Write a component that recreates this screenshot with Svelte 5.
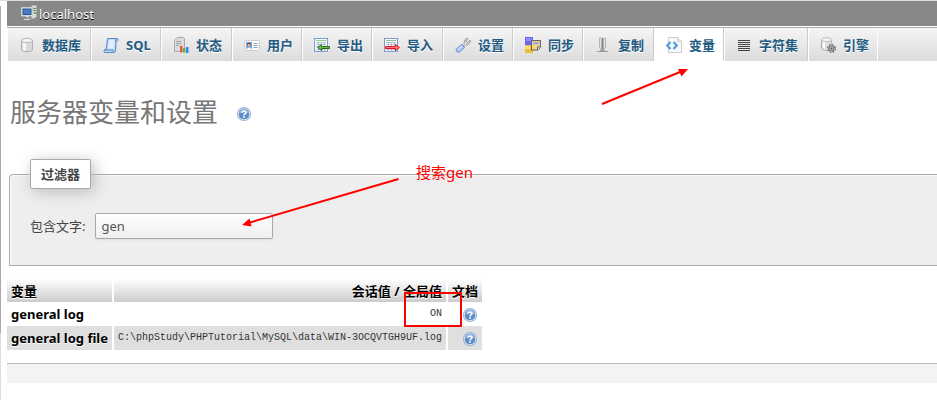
<script>
  const tabs = [
    { id: 'db', label: '数据库', wide: true },
    { id: 'sql', label: 'SQL' },
    { id: 'status', label: '状态' },
    { id: 'users', label: '用户' },
    { id: 'export', label: '导出' },
    { id: 'import', label: '导入' },
    { id: 'settings', label: '设置' },
    { id: 'sync', label: '同步' },
    { id: 'replication', label: '复制' },
    { id: 'vars', label: '变量', active: true },
    { id: 'charsets', label: '字符集', wide: true },
    { id: 'engines', label: '引擎' }
  ];
  const rows = [
    { name: 'general log', value: 'ON' },
    { name: 'general log file', value: 'C:\\phpStudy\\PHPTutorial\\MySQL\\data\\WIN-3OCQVTGH9UF.log' }
  ];
  let filter = $state('gen');
  const shown = $derived(rows.filter((r) => r.name.includes(filter)));
</script>

{#snippet help()}
  <a class="help" href="#doc" aria-label="文档">
    <svg width="16" height="16" viewBox="0 0 16 16">
      <circle cx="8" cy="8" r="7" fill="#8caad2" />
      <circle cx="8" cy="8" r="5.800" fill="#5f8cc6" stroke="#e3ebf6" stroke-width=".9" />
      <path d="M3 7.500a5 5 0 0 1 10 0q-5-1.500-10 0z" fill="#8fb0dc" />
      <path d="M6 6.700C6.100 4.500 10 4.500 10 6.600 10 8 8 7.900 8 9.400" fill="none" stroke="#fff" stroke-width="1.500" />
      <rect x="7.200" y="10.300" width="1.600" height="1.600" fill="#fff" />
    </svg>
  </a>
{/snippet}

{#snippet icon(id)}
  <svg class="icon" width="16" height="16" viewBox="0 0 16 16" aria-hidden="true">
    {#if id === 'db'}
      <path d="M2.500 3.500v9c0 3 11 3 11 0v-9z" fill="#d9d9d9" stroke="#b0b0b0" />
      <path d="M4 5v8l3 1V6z" fill="#f7f7f7" />
      <ellipse cx="8" cy="3.500" rx="5.500" ry="2.200" fill="#f2f2f2" stroke="#b8b8b8" />
    {:else if id === 'sql'}
      <path d="M4.500 1.500h10q1.500 2-.5 3l-1 0-.5 9.500q-.5 1.500-2 1.500h-9q-1.200-1.500.2-3h1.500z" fill="#bcd8f6" stroke="#5b8bc5" />
      <path d="M6 3h5.500l-.5 8.500H5z" fill="#e2effd" />
      <path d="M1.500 13h8.500q0 2 1.500 2M12.500 4.500q-.5-2 1-3" fill="none" stroke="#5b8bc5" />
    {:else if id === 'status'}
      <path d="M1.500 3l3-2.500h6l1 1V12l-2.500 2.500h-7.500z" fill="#dcdcdc" stroke="#aaa" />
      <path d="M3 4.500h5M3 6.500h5M3 8.500h3" stroke="#a0a0a0" />
      <rect x="7" y="9" width="2.500" height="6.500" fill="#f5533c" />
      <rect x="10" y="11" width="2.500" height="4.500" fill="#4cc24b" />
      <rect x="13" y="10" width="2.500" height="6" fill="#3f83f0" />
    {:else if id === 'users'}
      <rect x=".5" y="3.500" width="15" height="10" rx="1" fill="#fafafa" stroke="#cdcdcd" />
      <rect x="2" y="5" width="6" height="7" fill="#74a9e8" />
      <circle cx="5" cy="7.500" r="1.900" fill="#8b5332" />
      <circle cx="5" cy="8.200" r="1.200" fill="#f1b88c" />
      <path d="M2.500 12q2.500-3 5 0z" fill="#fff" />
      <path d="M9.500 6.500h4M9.500 8.500h4M9.500 10.500h4" stroke="#8baacb" />
    {:else if id === 'export' || id === 'import'}
      <rect x=".5" y="1.500" width="13" height="13" fill="#f8faff" stroke="#7d9cd0" />
      <path d="M2 3.500h10" stroke="#9ac48b" />
      <path d="M2 5.500h10M2 7.500h10M2 9.500h10M2 12.500h10M4.500 5v9M7.500 5v9M10.500 5v9" stroke="#a8b6cd" stroke-width=".8" />
      {#if id === 'export'}
        <path d="M3.500 10.500l4-3v2H15.500v2H7.500v2z" fill="#6bbd52" stroke="#276e20" />
      {:else}
        <path d="M1.500 9.500h10v-2l4 3-4 3v-2h-10z" fill="#ff7b7b" stroke="#e81818" />
      {/if}
    {:else if id === 'settings'}
      <path d="M7 8.500l2-2Q8.500 2.500 12 1l1 .5-2 2.500 1.500 1.500L15 3l.5 1q-1 4-4.500 4L9.500 9.500z" fill="#d5d5d5" stroke="#9a9a9a" stroke-width=".9" />
      <path d="M6.500 7.500l3 3-5 4.500q-3 1-3.500-2 0-1 1-1.500z" fill="#a9c8f4" stroke="#6d93d0" />
      <path d="M3 12.500l4-3.500" stroke="#e5f0ff" />
    {:else if id === 'sync'}
      <rect x="0" y="0" width="8" height="8" fill="#6a66ef" />
      <rect x="1" y="1" width="6" height="3" fill="#8d8aff" />
      <path d="M0 8h8v8H0z" fill="#edbc3f" />
      <path d="M0 9h5v3H0z" fill="#ffdf72" />
      <path d="M6.500 3.500h9v7l-2.500 2.500h-6.500z" fill="#f2d678" stroke="#655f68" />
      <rect x="8" y="5" width="6" height="2.500" fill="#aaa7ef" />
      <path d="M12.500 13v-3h3" fill="#fff" stroke="#655f68" />
    {:else if id === 'replication'}
      <path d="M4.500 1v9l2 3V1zM8.500 1v12l2-3V1z" fill="#e2e2e2" stroke="#b5b5b5" />
      <path d="M7.500 1v13" stroke="#858585" />
      <path d="M2 14.500h11M5 13.500h5" stroke="#9c9c9c" />
    {:else if id === 'vars'}
      <path d="M2.500.5h9l4 4v11h-13z" fill="#fafafa" stroke="#cbcbcb" />
      <path d="M11.500.5v4h4" fill="#eee" stroke="#cbcbcb" />
      <path d="M4.500 5L1.200 8.500l3.300 3.500M7.500 5l3.300 3.500L7.500 12" fill="none" stroke="#4f9ae8" stroke-width="2.200" />
    {:else if id === 'charsets'}
      <path d="M2 3.500h12M2 5.500h12M2 7.500h12M2 9.500h12M2 11.500h12M2 13.500h12" stroke="#444" />
    {:else if id === 'engines'}
      <path d="M1.500 2.500v9c0 2.500 10 2.500 10 0v-9z" fill="#dedede" stroke="#b5b5b5" />
      <path d="M3 4v7l2 1V5z" fill="#fff" />
      <ellipse cx="6.500" cy="2.700" rx="5" ry="2" fill="#f5f5f5" stroke="#bdbdbd" />
      <circle cx="11.500" cy="11.500" r="3.800" fill="none" stroke="#777" stroke-width="1.600" stroke-dasharray="1.700 1.280" />
      <circle cx="11.500" cy="11.500" r="2.500" fill="#c5c5c5" stroke="#777" stroke-width="1.200" />
      <circle cx="11.500" cy="11.500" r="1" fill="#555" />
    {/if}
  </svg>
{/snippet}

<div class="page">
  <header>
    <svg width="16" height="16" viewBox="0 0 16 16" aria-hidden="true">
      <path d="M10.500 1.500l1-1h4v11l-2 2h-3z" fill="#d8dcd8" stroke="#aab0aa" />
      <path d="M12 3.500h3M12 5.500h3" stroke="#7b867b" />
      <rect x="13" y="7" width="2" height="2" fill="#54b948" />
      <rect x=".5" y="2.500" width="11" height="8.500" fill="#dce7f5" stroke="#c6ced8" />
      <rect x="2" y="4" width="8" height="5.500" fill="#4a7dc0" stroke="#25528e" />
      <path d="M5 11.500h2v2M3 14.500h6" stroke="#dedede" fill="none" />
    </svg>
    <a href="#server">localhost</a>
  </header>

  <nav>
    <ul>
      {#each tabs as tab}
        <li class:wide={tab.wide} class:active={tab.active}>
          <a href={'#' + tab.id}>{@render icon(tab.id)}{tab.label}</a>
        </li>
      {/each}
    </ul>
  </nav>

  <main>
    <h2>服务器变量和设置 {@render help()}</h2>

    <fieldset>
      <legend>过滤器</legend>
      <label for="filter">包含文字:</label>
      <input id="filter" type="text" bind:value={filter} />
    </fieldset>

    <table>
      <thead>
        <tr><th>变量</th><th class="value">会话值 / 全局值</th><th>文档</th></tr>
      </thead>
      <tbody>
        {#each shown as row}
          <tr>
            <th scope="row">{row.name}</th>
            <td class="value">{row.value}</td>
            <td class="doc">{@render help()}</td>
          </tr>
        {/each}
      </tbody>
    </table>
  </main>
  <footer></footer>

  <div class="notes">
    <svg width="937" height="400" viewBox="0 0 937 400" aria-hidden="true">
      <g stroke="#f00" stroke-width="2" fill="none">
        <path d="M602 104L680 72M398.500 179L250 222.500" />
        <rect x="405" y="293" width="56" height="33" />
      </g>
      <path d="M688 69l-6.500 7.500-3.500-7.500zM242 225l7.500-6.500 2 8z" fill="#f00" />
    </svg>
    <span>搜索gen</span>
  </div>
</div>

<style>
  :global(body) {
    margin: 0;
    background: #fff;
  }
  .page {
    position: relative;
    min-height: 400px;
    box-sizing: border-box;
    overflow: hidden;
    padding-left: 7px;
    border-top: 1px solid #dcdde0;
    background: linear-gradient(#fff 5px, #aaa 5px 332px, #ddd 332px) left / 1px 100% no-repeat;
    font: 13px/18px "Noto Sans", "Noto Sans CJK SC", sans-serif;
    color: #444;
  }
  a {
    color: inherit;
    text-decoration: none;
  }
  header {
    display: flex;
    align-items: center;
    gap: 2px;
    height: 25px;
    padding-left: 14px;
    background: #888;
    color: #fff;
    text-shadow: 0 1px 0 #000;
  }
  header svg {
    margin-bottom: 2px;
  }
  nav {
    margin-top: 1px;
    border-top: 1px solid #aaa;
    background: linear-gradient(#f5f5f5, #dcdcdc);
  }
  ul {
    display: flex;
    margin: 0;
    padding: 0;
    list-style: none;
  }
  li {
    box-sizing: border-box;
    width: 70px;
    height: 33px;
    border-left: 1px solid #fff;
    border-right: 1px solid #ccc;
  }
  li:nth-child(3n) {
    width: 71px;
  }
  li.wide {
    width: 84px;
  }
  li:last-child {
    width: 70px;
    border-right-color: #fff;
  }
  li.active {
    background: #fff;
  }
  li a {
    display: flex;
    align-items: center;
    gap: 7px;
    height: 33px;
    padding-left: 11px;
    color: #235a81;
    font-weight: bold;
    white-space: nowrap;
    text-shadow: 0 1px 0 #fff;
  }
  .icon {
    flex: none;
  }
  h2 {
    display: flex;
    align-items: center;
    gap: 18px;
    margin: 32px 0 0 3px;
    font-size: 26px;
    line-height: 38px;
    font-weight: 400;
    color: #777;
  }
  .help {
    display: inline-flex;
    vertical-align: middle;
  }
  h2 .help {
    padding-top: 4px;
  }
  fieldset {
    display: flex;
    align-items: center;
    gap: 10px;
    margin: 28px -4px 0 2px;
    padding: 24px 20px 26px;
    border: 1px solid #aaa;
    border-radius: 4px 0 0 0;
    background: #eee;
    box-shadow: inset 1px 1px 2px #fff;
  }
  legend {
    padding: 5px 10px;
    border: 1px solid #aaa;
    border-radius: 2px;
    background: #fff;
    box-shadow: 3px 3px 15px #bbb;
    font-weight: bold;
  }
  input {
    box-sizing: border-box;
    width: 178px;
    height: 26px;
    padding: 0 5px;
    border: 1px solid #aaa;
    border-radius: 2px;
    background: linear-gradient(#fff, #eee);
    box-shadow: 0 1px 2px #ddd;
    font: inherit;
    color: #555;
    outline: none;
  }
  table {
    margin-top: 13px;
    border-collapse: collapse;
  }
  th,
  td {
    height: 24px;
    padding: 0 4px;
    line-height: 18px;
    border-right: 2px solid #fff;
  }
  th {
    text-align: left;
    font-weight: bold;
    color: #000;
    white-space: nowrap;
    text-shadow: 0 1px 0 #fff;
  }
  th:last-child,
  td:last-child {
    border-right: 0;
  }
  thead th {
    height: 23px;
    background: linear-gradient(#fff, #ccc);
  }
  tbody tr:nth-child(even) {
    background: #dfdfdf;
  }
  .value {
    text-align: right;
  }
  td.value {
    font-family: "Liberation Mono", monospace;
    font-size: 10px;
    color: #333;
  }
  .doc {
    text-align: right;
  }
  footer {
    height: 19px;
    margin-top: 13px;
    border-top: 1px solid #bbb;
    background: #f3f3f3;
  }
  .notes {
    position: absolute;
    top: -1px;
    left: 0;
    pointer-events: none;
    color: #f00;
  }
  .notes svg {
    display: block;
  }
  .notes span {
    position: absolute;
    left: 416px;
    top: 162px;
    font-size: 15px;
    line-height: 20px;
    white-space: nowrap;
  }
</style>
